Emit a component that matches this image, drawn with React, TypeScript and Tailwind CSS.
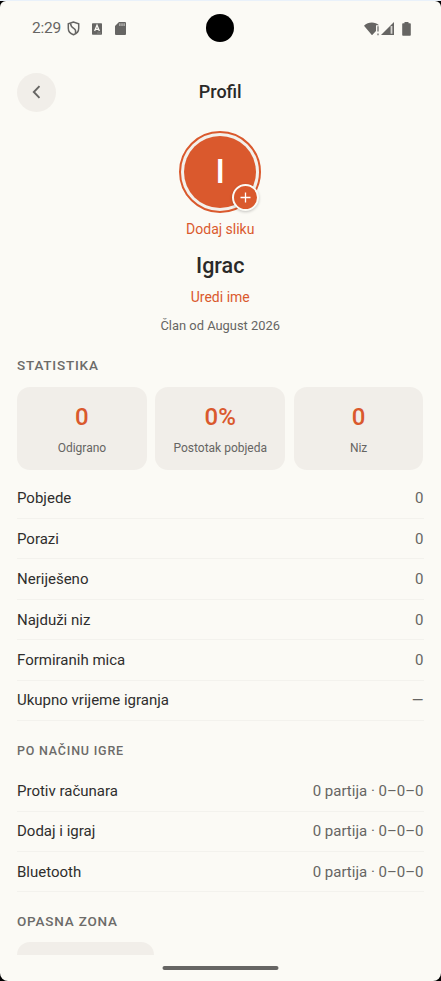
import React from 'react';

type Entry = { label: string; value: string };

const stats: Entry[] = [
  { label: 'Odigrano', value: '0' },
  { label: 'Postotak pobjeda', value: '0%' },
  { label: 'Niz', value: '0' },
];

const totals: Entry[] = [
  { label: 'Pobjede', value: '0' },
  { label: 'Porazi', value: '0' },
  { label: 'Neriješeno', value: '0' },
  { label: 'Najduži niz', value: '0' },
  { label: 'Formiranih mica', value: '0' },
  { label: 'Ukupno vrijeme igranja', value: '—' },
];

const modes: Entry[] = [
  { label: 'Protiv računara', value: '0 partija · 0–0–0' },
  { label: 'Dodaj i igraj', value: '0 partija · 0–0–0' },
  { label: 'Bluetooth', value: '0 partija · 0–0–0' },
];

function StatusBar() {
  return (
    <div className="relative flex h-[55px] shrink-0 items-center pl-[32px] pr-[30px] text-[#666563]">
      <span className="text-[15.500px] leading-none tracking-[-0.2px]">2:29</span>
      <svg className="ml-[6px]" width="13" height="15" viewBox="0 0 13 15" fill="none" stroke="currentColor" strokeWidth="1.500">
        <path d="M6.500 1 1.300 2.800v4.400c0 3 2.100 5.400 5.200 6.500 3.100-1.100 5.200-3.500 5.200-6.500V2.800Z" />
        <path d="M3.600 2.500c.1 2.700 1.100 3.800 3.200 4.900 2 1.100 2.200 2.700 1.700 5" />
      </svg>
      <svg className="ml-[12px]" width="10" height="12" viewBox="0 0 10 12">
        <rect width="10" height="11.500" y=".3" rx=".7" fill="currentColor" />
        <path d="m2.600 8 2.400-5.700L7.400 8M3.500 6.300h3" fill="none" stroke="#fbfaf5" strokeWidth="1.300" />
        <path d="M5.500 10h1M7.500 10h1" stroke="#aaa9a5" strokeWidth="1" />
      </svg>
      <svg className="ml-[13px]" width="11" height="13" viewBox="0 0 11 13">
        <path d="M4 0h6a1 1 0 0 1 1 1v11a1 1 0 0 1-1 1H1a1 1 0 0 1-1-1V4Z" fill="currentColor" />
        <path d="M4.900 1.300v2.700M7 1.300v2.700M9.100 1.300v2.700" stroke="#d6d5d1" strokeWidth="1" />
      </svg>
      <svg className="ml-auto" width="16" height="14" viewBox="0 0 16 14">
        <path d="M0 3.700C4.300-.4 11-.4 15 3.200H12V8.900L8 13.300Z" fill="currentColor" />
        <path d="M14 4.200v5.300M14 11.500v1.800" stroke="currentColor" strokeWidth="1.200" />
      </svg>
      <svg className="ml-[1px]" width="14" height="13" viewBox="0 0 14 13">
        <path d="M0 13 13 0v13Z" fill="currentColor" />
        <path d="M10.500 4v7.800" stroke="#d6d5d1" strokeWidth="1.800" />
      </svg>
      <svg className="ml-[7px]" width="9" height="14" viewBox="0 0 9 14">
        <path d="M2.500 0h4v1.200H8a.8.8 0 0 1 .8.800v11a.8.8 0 0 1-.8.800H1a.8.8 0 0 1-.8-.8V2a.8.8 0 0 1 .8-.8h1.500Z" fill="currentColor" />
      </svg>
      <div className="absolute left-[206px] top-[13px] size-[28px] rounded-full bg-black" />
    </div>
  );
}

function Avatar() {
  return (
    <div className="relative mt-[19px] flex size-[82px] items-center justify-center rounded-full border-2 border-[#da592d] bg-[#f3f1ec]">
      <div className="flex size-[72px] items-center justify-center rounded-full bg-[#da592d] text-[33px] font-medium leading-none text-white">
        I
      </div>
      <div className="absolute left-[51px] top-[51px] flex size-[27px] items-center justify-center rounded-full border-2 border-[#fbfaf5] bg-[#da592d] shadow-[0_1px_3px_rgba(0,0,0,0.22)]">
        <svg width="11" height="11" viewBox="0 0 11 11" stroke="white" strokeWidth="1.300">
          <path d="M5.500.5v10M.5 5.500h10" />
        </svg>
      </div>
    </div>
  );
}

function SectionTitle({ children, className }: { children: React.ReactNode; className: string }) {
  return <h2 className={`h-[18px] font-medium leading-[18px] text-[#6c6b69] ${className}`}>{children}</h2>;
}

function List({ rows }: { rows: Entry[] }) {
  return (
    <div className="flex flex-col">
      {rows.map((row) => (
        <div key={row.label} className="flex h-[40.430px] items-center justify-between border-b border-[#f3f2ed] text-[15px] leading-[20px]">
          <span className="text-[#2f2e2d]">{row.label}</span>
          <span className="text-[#666563]">{row.value}</span>
        </div>
      ))}
    </div>
  );
}

export default function App() {
  return (
    <div className="h-[981px] w-[441px] overflow-hidden bg-black font-['Roboto',sans-serif]">
      <div className="h-px bg-[#e9f1fa]" />
      <div className="flex h-[980px] flex-col overflow-hidden rounded-t-[6px] rounded-b-[8px] bg-[#fbfaf5]">
        <StatusBar />
        <main className="flex h-[899px] shrink-0 flex-col overflow-hidden pl-[17px] pr-[17.500px]">
          <header className="mt-[16.600px] flex h-[39px] shrink-0 items-center justify-between">
            <button className="flex size-[39px] items-center justify-center rounded-full bg-[#f1eee9]" aria-label="Natrag">
              <svg width="9" height="14" viewBox="0 0 9 14" fill="none" stroke="#666563" strokeWidth="1.900">
                <path d="M7.500 1.200 1.800 7l5.700 5.800" />
              </svg>
            </button>
            <h1 className="text-[18px] font-medium leading-6 text-[#2a2928]">Profil</h1>
            <div className="w-[39px]" />
          </header>
          <section className="flex shrink-0 flex-col items-center">
            <Avatar />
            <button className="mt-[6px] text-[14px] leading-[20px] text-[#da592d]">Dodaj sliku</button>
            <h2 className="mt-[12px] text-[21.500px] font-medium leading-[30px] text-[#2a2928]">Igrac</h2>
            <button className="mt-[6px] text-[14px] leading-[20px] text-[#da592d]">Uredi ime</button>
            <p className="mt-[10px] text-[12.900px] leading-[18px] text-[#666563]">Član od August 2026</p>
          </section>
          <section className="mt-[21px] shrink-0">
            <SectionTitle className="text-[13.500px] tracking-[0.800px]">STATISTIKA</SectionTitle>
            <div className="mt-[13.400px] grid grid-cols-3 gap-[8.600px]">
              {stats.map((stat) => (
                <div key={stat.label} className="flex h-[83px] flex-col items-center rounded-[13px] bg-[#f1eee9] pt-[15px]">
                  <span className="text-[24px] font-medium leading-[30px] text-[#da592d]">{stat.value}</span>
                  <span className="mt-[7px] text-[12px] leading-[18px] text-[#666563]">{stat.label}</span>
                </div>
              ))}
            </div>
            <div className="mt-[8.600px]">
              <List rows={totals} />
            </div>
          </section>
          <section className="mt-[21px] shrink-0">
            <SectionTitle className="text-[12.500px] tracking-[0.800px]">PO NAČINU IGRE</SectionTitle>
            <div className="mt-[11px]">
              <List rows={modes} />
            </div>
          </section>
          <section className="mt-[20px] shrink-0">
            <SectionTitle className="text-[13.500px] tracking-[0.800px]">OPASNA ZONA</SectionTitle>
            <div className="mt-[12px] h-[42px] w-[137px] rounded-[13px] bg-[#f1eee9]" />
          </section>
        </main>
        <div className="mx-auto mt-[10.500px] h-[4px] w-[116px] shrink-0 -translate-x-[0.500px] rounded-full bg-[#666563]" />
      </div>
    </div>
  );
}
